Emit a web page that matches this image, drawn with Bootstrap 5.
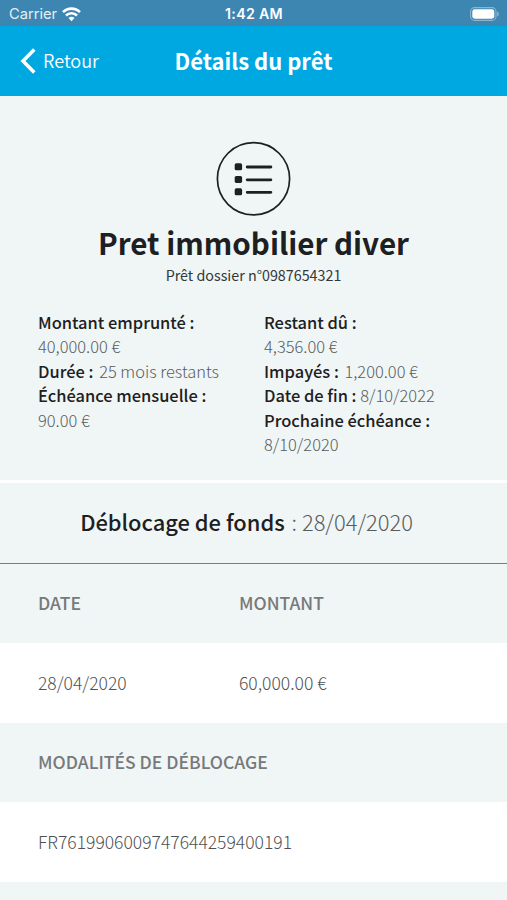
<!DOCTYPE html>
<html lang="fr">
<head>
<meta charset="utf-8">
<meta name="viewport" content="width=device-width, initial-scale=1">
<title>Détails du prêt</title>
<link href="https://cdn.jsdelivr.net/npm/bootstrap@5.3.0/dist/css/bootstrap.min.css" rel="stylesheet">
<style>
body{font-family:"Noto Sans CJK SC",sans-serif;background:#f0f5f6;color:#1d2021;width:507px;height:900px;overflow:hidden;font-size:16px}
.status{height:26px;background:#3e86b2;font:14.7px/26px Inter,sans-serif;padding:1px 8px 0 9px}
.status .carrier{color:#e4eff5}
.status .clock{font-weight:600;font-size:14.2px;letter-spacing:.3px}
.appbar{height:70px;background:#00a8e2}
.appbar h1{font-size:22px;font-weight:700;line-height:30px;padding-bottom:2px}
.back{font-size:18.1px;line-height:28px;font-weight:350}
.back span{padding-bottom:2px}
.back svg{margin-left:20px;margin-right:7px}
.hero{height:384px;padding-top:45px}
.hero h2{font-size:29.6px;font-weight:700;line-height:44px;margin-top:5px}
.sub{font-size:14.3px;line-height:19px;color:#333839}
.facts{padding:0 38px;margin-top:26px;font-size:16.45px;line-height:24.4px}
.facts>div{width:226px;flex:none}
.facts b,.funds b{font-weight:500}
.facts .wide{margin-left:2px}
.light-txt{font-weight:300;color:#595c5d}
.funds{height:84px;border-top:3px solid #fff;border-bottom:1px solid #7a7d7e;font-size:21.9px;line-height:77px;padding-right:14px}
.funds .light-txt{margin-left:2px}
.line{padding:0 38px;height:80px;line-height:79px;font-size:17.5px;font-weight:300;color:#4f5152}
.line .cell{width:201px}
.line.head{font-weight:500;color:#77797a;height:79px;line-height:78px}
</style>
</head>
<body>
<header>
<div class="status d-flex text-white">
<div class="carrier col d-flex align-items-center"><span>Carrier</span>
<svg class="ms-1" width="21" height="16" viewBox="0 0 21 16" fill="none" stroke="#fff" stroke-width="2.6"><path d="M2 6.2a12 12 0 0 1 17 0M5 9.5a7.8 7.8 0 0 1 11 0"/><path d="M10.5 15.2 7.5 12a4.2 4.2 0 0 1 6 0z" fill="#fff" stroke="none"/></svg></div>
<div class="clock">1:42 AM</div>
<div class="col d-flex align-items-center justify-content-end"><svg width="30" height="14" viewBox="0 0 30 14"><rect x="1.6" y=".6" width="25.4" height="12.8" rx="4" fill="none" stroke="#8bb6d0" stroke-width="1.1"/><rect x="3.3" y="2.3" width="22" height="9.4" rx="2.4" fill="#fff"/><path d="M28.2 4.5c2.2.7 2.2 4.3 0 5z" fill="#8bb6d0"/></svg></div>
</div>
<nav class="appbar d-flex align-items-center text-white">
<div class="back col d-flex align-items-center"><svg width="16" height="26" viewBox="0 0 16 26" fill="none" stroke="#fff" stroke-width="3.6"><path d="M14.3 1.5 3 13l11.3 11.5"/></svg><span>Retour</span></div>
<h1 class="m-0">Détails du prêt</h1>
<div class="col"></div>
</nav>
</header>
<main>
<section class="hero">
<div class="text-center">
<svg class="d-block mx-auto" width="75" height="75" viewBox="0 0 75 75" fill="#1d2021"><circle cx="37.5" cy="37.8" r="36.1" fill="none" stroke="#1d2021" stroke-width="1.7"/><rect x="18.7" y="22.3" width="7.4" height="7" rx="1.6"/><rect x="18.7" y="34.9" width="7.4" height="7" rx="1.6"/><rect x="18.7" y="47.3" width="7.4" height="7" rx="1.6"/><path d="M31.2 26h23.7M31.2 38.8h23.7M31.2 51.3h23.7" stroke="#1d2021" stroke-width="2.8" stroke-linecap="round"/></svg>
<h2 class="mb-0">Pret immobilier diver</h2>
<div class="sub">Prêt dossier n°0987654321</div>
</div>
<div class="facts d-flex">
<div><b>Montant emprunté :</b><br><span class="light-txt">40,000.00 €</span><br><b>Durée :</b> <span class="light-txt wide">25 mois restants</span><br><b>Échéance mensuelle :</b><br><span class="light-txt">90.00 €</span></div>
<div><b>Restant dû :</b><br><span class="light-txt">4,356.00 €</span><br><b>Impayés :</b> <span class="light-txt wide">1,200.00 €</span><br><b>Date de fin :</b> <span class="light-txt">8/10/2022</span><br><b>Prochaine échéance :</b><br><span class="light-txt">8/10/2020</span></div>
</div>
</section>
<section class="funds text-center"><b>Déblocage de fonds</b> <span class="light-txt">: 28/04/2020</span></section>
<section>
<div class="line head d-flex"><div class="cell">DATE</div><div>MONTANT</div></div>
<div class="line bg-white d-flex"><div class="cell">28/04/2020</div><div>60,000.00 €</div></div>
<div class="line head">MODALITÉS DE DÉBLOCAGE</div>
<div class="line bg-white">FR7619906009747644259400191</div>
</section>
</main>
<script src="https://cdn.jsdelivr.net/npm/bootstrap@5.3.0/dist/js/bootstrap.bundle.min.js"></script>
</body>
</html>
